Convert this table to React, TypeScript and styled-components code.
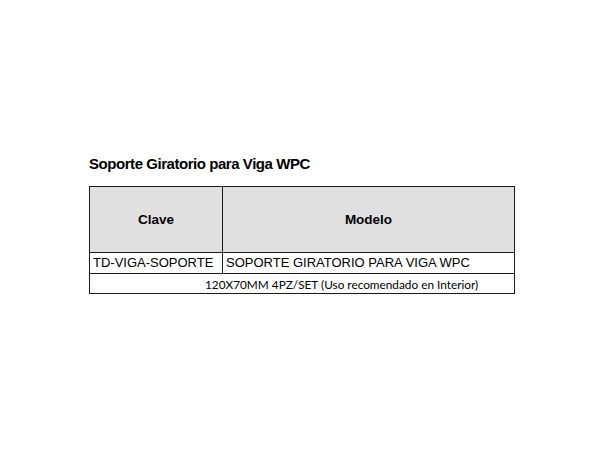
import React from "react";
import styled, { createGlobalStyle } from "styled-components";

const GlobalStyle = createGlobalStyle`
	html, body {
		margin: 0;
		padding: 0;
		background: #ffffff;
	}
`;

const Page = styled.div`
	width: 600px;
	height: 455px;
	box-sizing: border-box;
	padding: 154px 0 0 89px;
	font-family: "Liberation Sans", Arial, sans-serif;
	color: #000000;
`;

const Title = styled.h2`
	margin: 0 0 13px 0;
	font-size: 15px;
	font-weight: bold;
	letter-spacing: -0.45px;
	line-height: 19px;
`;

const Table = styled.table`
	border-collapse: collapse;
	width: 426px;
	table-layout: fixed;
`;

const HeadCell = styled.th<{ $width?: number }>`
	width: ${(p) => (p.$width ? `${p.$width}px` : "auto")};
	height: 65px;
	padding: 0;
	background: #e0e0e0;
	border: 1.5px solid #1a1a1a;
	font-size: 13.5px;
	font-weight: bold;
	text-align: center;
	vertical-align: middle;
`;

const Cell = styled.td`
	height: 20px;
	padding: 0 0 0 3px;
	border: 1.5px solid #1a1a1a;
	font-size: 13px;
	line-height: 20px;
	white-space: nowrap;
	overflow: hidden;
`;

const NoteCell = styled.td`
	height: 18px;
	padding: 1px 0 0 115px;
	border: 1.5px solid #1a1a1a;
	font-family: Lato, "Open Sans", sans-serif;
	font-size: 11.8px;
	line-height: 17px;
	text-align: left;
	white-space: nowrap;
`;

export default function App() {
	return (
		<>
			<GlobalStyle />
			<Page>
				<Title>Soporte Giratorio para Viga WPC</Title>
				<Table>
					<thead>
						<tr>
							<HeadCell $width={132}>Clave</HeadCell>
							<HeadCell>Modelo</HeadCell>
						</tr>
					</thead>
					<tbody>
						<tr>
							<Cell>TD-VIGA-SOPORTE</Cell>
							<Cell>SOPORTE GIRATORIO PARA VIGA WPC</Cell>
						</tr>
						<tr>
							<NoteCell colSpan={2}>
								120X70MM 4PZ/SET (Uso recomendado en Interior)
							</NoteCell>
						</tr>
					</tbody>
				</Table>
			</Page>
		</>
	);
}
